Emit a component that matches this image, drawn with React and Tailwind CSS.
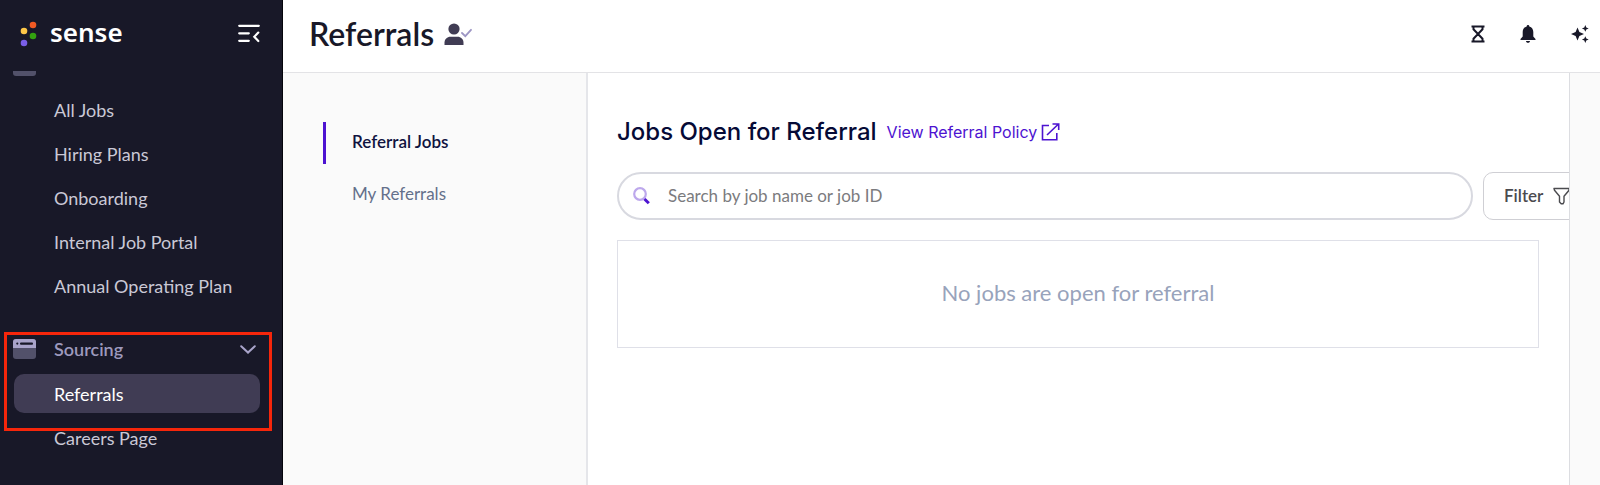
import React, { useState } from "react";

const jobLinks = [
  "All Jobs",
  "Hiring Plans",
  "Onboarding",
  "Internal Job Portal",
  "Annual Operating Plan",
];

function SenseLogo() {
  return (
    <a href="#home" className="flex items-center gap-3 text-white">
      <svg width="18" height="26" viewBox="0 0 18 26" aria-hidden="true">
        <circle cx="13" cy="4" r="3.3" fill="#f15a24" />
        <circle cx="4" cy="10" r="3.3" fill="#fdc748" />
        <circle cx="13" cy="15" r="3.3" fill="#33a110" />
        <circle cx="4" cy="22" r="3.3" fill="#7a5fe8" />
      </svg>
      <span className="pb-1 font-['Noto_Sans',sans-serif] text-[26px] leading-8 font-semibold">
        sense
      </span>
    </a>
  );
}

function WindowIcon() {
  return (
    <svg width="23" height="20" viewBox="0 0 23 20" aria-hidden="true">
      <rect width="23" height="20" rx="3" fill="#52516a" />
      <path d="M3 0h17a3 3 0 0 1 3 3v6H0V3a3 3 0 0 1 3-3z" fill="#a9a4ca" />
      <rect x="7" y="3.4" width="13" height="2.4" rx="1" fill="#181828" />
      <circle cx="4.3" cy="4.6" r="1.1" fill="#181828" />
    </svg>
  );
}

function SectionHeader({ label, open, faded }) {
  return (
    <button
      type="button"
      className="flex h-11 w-full items-center pl-[13px] pr-[26px] text-left font-semibold text-[#9d99bd]"
    >
      <WindowIcon />
      <span className={faded ? "ml-[18px] flex-1 pb-1 text-[#2c2b3e]" : "ml-[18px] flex-1"}>
        {label}
      </span>
      {open && (
        <svg width="16" height="9" viewBox="0 0 16 9" fill="none" aria-hidden="true">
          <path d="M1.2 1.2L8 7.6l6.8-6.4" stroke="#a9a4ca" strokeWidth="2" strokeLinecap="round" />
        </svg>
      )}
    </button>
  );
}

function SideLink({ label, active }) {
  return (
    <a
      href="#nav"
      className={
        active
          ? "ml-[14px] mr-[22px] my-[3px] flex h-[39px] items-center rounded-[10px] bg-[#403c54] pl-10 text-white"
          : "flex h-11 items-center pl-[54px] text-[#cac8d6]"
      }
    >
      {label}
    </a>
  );
}

function Sidebar() {
  return (
    <aside className="flex w-[283px] shrink-0 flex-col overflow-hidden border-r border-[#05050c] bg-[#181828] text-lg">
      <div className="flex h-[71px] shrink-0 items-center justify-between pl-5 pr-[22px] pb-1">
        <SenseLogo />
        <button type="button" aria-label="Collapse menu">
          <svg width="22" height="19" viewBox="0 0 22 19" fill="none" stroke="#fff" strokeWidth="2.2" strokeLinecap="round" aria-hidden="true">
            <path d="M1.2 1.8h19.6M1.2 9.3h9.6M1.2 16.8h9.6" />
            <path d="M20.3 8.6l-4 4.2 4 4.2" />
          </svg>
        </button>
      </div>
      <div className="flex-1 overflow-hidden">
        <nav className="-mt-[27px]">
          <SectionHeader label="Jobs" faded />
          {jobLinks.map((label) => (
            <SideLink key={label} label={label} />
          ))}
          <div className="relative mt-[19px]">
            <SectionHeader label="Sourcing" open />
            <SideLink label="Referrals" active />
            <SideLink label="Careers Page" />
            <div className="pointer-events-none absolute left-1 right-[10px] top-[5px] h-[99px] border-[3px] border-[#f6260b]" />
          </div>
        </nav>
      </div>
    </aside>
  );
}

function Header() {
  return (
    <header className="flex h-[73px] shrink-0 items-center justify-between border-b border-[#e3e3e6] pl-[26px] pr-[11px] pb-1">
      <div className="flex items-center gap-[10px]">
        <h1 className="text-[32px] leading-10 font-semibold text-[#181828]">Referrals</h1>
        <svg width="28" height="23" viewBox="0 0 28 23" aria-hidden="true">
          <circle cx="10" cy="6" r="5.6" fill="#403c54" />
          <path d="M0.5 22v-2.2c0-3.6 2.6-6 6-6h7c3.4 0 6 2.4 6 6V22z" fill="#403c54" />
          <path d="M18 10l3.3 3.2L27 6.8" fill="none" stroke="#9d96c4" strokeWidth="1.8" strokeLinecap="round" />
        </svg>
      </div>
      <div className="flex items-center gap-[35px] text-[#181828]">
        <button type="button" aria-label="Pending">
          <svg width="14" height="18" viewBox="0 0 14 18" fill="none" stroke="currentColor" strokeWidth="2" aria-hidden="true">
            <path d="M0.5 1.5h13M0.5 16.5h13" />
            <path d="M2.5 1.5v2.8L7 9l4.5-4.7V1.5M2.5 16.5v-2.8L7 9l4.5 4.7v2.8" />
          </svg>
        </button>
        <button type="button" aria-label="Notifications">
          <svg width="16" height="18" viewBox="0 0 16 18" fill="currentColor" aria-hidden="true">
            <path d="M8 0c.8 0 1.3.6 1.3 1.4 2.7.7 4 2.9 4 5.6v4.6L15.5 14v1H.5v-1l2.200-2.400V7c0-2.700 1.300-4.900 4-5.600C6.700.6 7.200 0 8 0z" />
            <path d="M6 16h4c0 1-.9 1.800-2 1.800S6 17 6 16z" />
          </svg>
        </button>
        <button type="button" aria-label="Assistant">
          <svg width="18" height="18" viewBox="0 0 18 18" fill="currentColor" aria-hidden="true">
            <path d="M6.5 2.500l1.900 4.600L13 9l-4.600 1.900-1.900 4.600-1.900-4.600L0 9l4.600-1.900z" />
            <path d="M14.300 0l1 2.400 2.400 1-2.400 1-1 2.400-1-2.400-2.400-1 2.400-1z" />
            <path d="M14.300 11.200l1 2.400 2.400 1-2.400 1-1 2.400-1-2.400-2.400-1 2.400-1z" />
          </svg>
        </button>
      </div>
    </header>
  );
}

function SubNav() {
  return (
    <nav className="flex w-[305px] shrink-0 flex-col gap-[10px] border-r-2 border-[#e5e6ea] bg-[#fafafa] pl-10 pt-[49px] text-[17px]">
      <a href="#jobs" className="flex h-[42px] items-center border-l-[3px] border-[#4d13d1] pb-[2px] pl-[26px] font-semibold text-[#101340]">
        Referral Jobs
      </a>
      <a href="#mine" className="flex h-[42px] items-center pb-[2px] pl-[29px] text-[#64708b]">
        My Referrals
      </a>
    </nav>
  );
}

function Content() {
  const [search, setSearch] = useState("");

  return (
    <main className="flex-1 overflow-hidden border-r border-[#dcdde1] pl-[29px] pr-[30px] pt-[43px]">
      <div className="flex items-center gap-[10px] font-[Inter,sans-serif]">
        <h2 className="text-2xl font-medium text-[#050a36]">Jobs Open for Referral</h2>
        <a href="#policy" className="flex items-center gap-1 text-base text-[#4d13d1]">
          View Referral Policy
          <svg width="19" height="18" viewBox="0 0 19 18" fill="none" stroke="currentColor" strokeWidth="1.6" aria-hidden="true">
            <path d="M8 2.5H1.5v14.200h14.300V10" />
            <path d="M6 12L17.500 1M11.500 1h6.200v6" />
          </svg>
        </a>
      </div>

      <div className="-mr-[52px] mt-6 flex h-12 gap-[10px]">
        <label className="flex flex-1 items-center gap-[18px] rounded-full border-2 border-[#d8d9e0] pl-[14px] pr-6">
          <svg width="17" height="18" viewBox="0 0 17 18" fill="none" aria-hidden="true">
            <circle cx="7" cy="7" r="5.8" stroke="#bda8ec" strokeWidth="2.2" />
            <path d="M11.5 12l4.300 4.300" stroke="#4d13d1" strokeWidth="3" />
          </svg>
          <input
            type="text"
            aria-label="Search jobs"
            placeholder="Search by job name or job ID"
            value={search}
            onChange={(e) => setSearch(e.target.value)}
            className="min-w-0 flex-1 text-[17px] placeholder:text-[#7b7b7e] focus:outline-none"
          />
        </label>
        <button
          type="button"
          className="flex w-[108px] shrink-0 items-center gap-[10px] rounded-[10px] border border-[#cfcfd4] pl-5 text-[17px] font-semibold text-[#4b4b4f]"
        >
          Filter
          <svg width="17" height="18" viewBox="0 0 17 18" fill="none" stroke="currentColor" strokeWidth="1.4" strokeLinejoin="round" aria-hidden="true">
            <path d="M1 1.500h15v1.800l-5 6v5.700L10 16.800H8.200L6.500 15V9.300l-5-6z" />
          </svg>
        </button>
      </div>

      <div className="mt-5 flex h-[108px] items-center justify-center border border-[#dfe0e8] pb-1 text-[22px] text-[#98a3bb]">
        No jobs are open for referral
      </div>
    </main>
  );
}

export default function App() {
  return (
    <div className="flex h-screen overflow-hidden bg-white font-[Lato,sans-serif]">
      <Sidebar />
      <div className="flex min-w-0 flex-1 flex-col">
        <Header />
        <div className="flex flex-1 bg-[#fafafa]">
          <SubNav />
          <div className="flex min-w-0 flex-1 pr-[30px]">
            <div className="flex min-w-0 flex-1 bg-white">
              <Content />
            </div>
          </div>
        </div>
      </div>
    </div>
  );
}
